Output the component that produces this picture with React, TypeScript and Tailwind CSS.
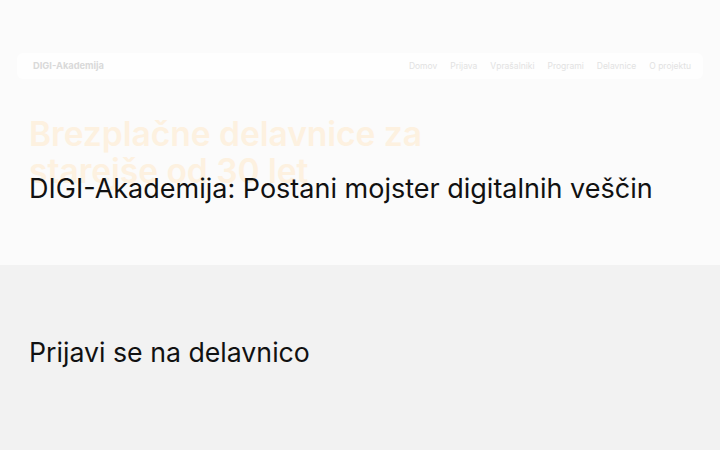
import React from 'react';

const navLinks = ['Domov', 'Prijava', 'Vprašalniki', 'Programi', 'Delavnice', 'O projektu'];

function Header() {
  return (
    <header className="px-[17px] pt-[53px]">
      <div className="flex h-[26px] items-center justify-between rounded-md bg-[#fefefe] pl-4 pr-3">
        <span className="text-[9.3px] font-bold text-[#d9d9d9]">DIGI-Akademija</span>
        <nav className="flex items-center gap-[13px] text-[8.5px] text-[#e2e2e2]">
          {navLinks.map((link) => (
            <a key={link} href="#">
              {link}
            </a>
          ))}
        </nav>
      </div>
    </header>
  );
}

export default function App() {
  return (
    <div className="min-h-[450px] bg-[#fbfbfb] font-['Inter','Noto_Sans',sans-serif]">
      <Header />
      <section className="px-[29px] pt-[37px] pb-[61px]">
        <h1 className="-mb-[16px] max-w-[440px] text-[33.5px] leading-[37px] font-semibold text-[#fdf1e0]">
          Brezplačne delavnice za starejše od 30 let
        </h1>
        <h2 className="relative text-[27px] leading-[30px] text-[#111111]">
          DIGI-Akademija: Postani mojster digitalnih veščin
        </h2>
      </section>
      <section className="bg-[#f2f2f2] px-[29px] pt-[72px] pb-[83px]">
        <h2 className="text-[26.7px] leading-[30px] text-[#111111]">Prijavi se na delavnico</h2>
      </section>
    </div>
  );
}
